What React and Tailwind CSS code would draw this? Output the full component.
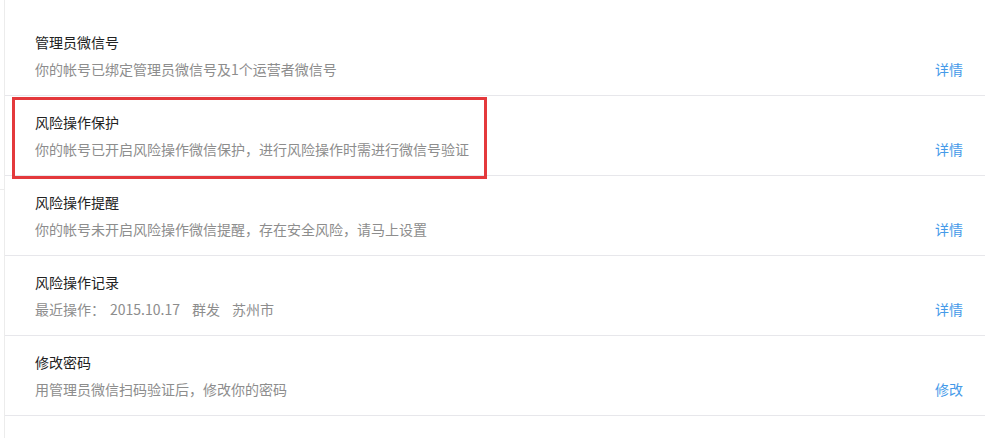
const items = [
  { title: '管理员微信号', desc: '你的帐号已绑定管理员微信号及1个运营者微信号', action: '详情' },
  { title: '风险操作保护', desc: '你的帐号已开启风险操作微信保护，进行风险操作时需进行微信号验证', action: '详情', marked: true },
  { title: '风险操作提醒', desc: '你的帐号未开启风险操作微信提醒，存在安全风险，请马上设置', action: '详情' },
  {
    title: '风险操作记录',
    desc: (
      <>
        最近操作：<span className="ml-[5px]">2015.10.17</span>
        <span className="ml-[12px]">群发</span>
        <span className="ml-[12px]">苏州市</span>
      </>
    ),
    action: '详情',
  },
  { title: '修改密码', desc: '用管理员微信扫码验证后，修改你的密码', action: '修改' },
];

export default function App() {
  return (
    <div
      className="relative w-[985px] h-[438px] overflow-hidden bg-white text-[14px]"
      style={{ fontFamily: '"Noto Sans CJK SC", "Liberation Sans", sans-serif' }}
    >
      <div className="absolute left-0 top-[189px] w-[4px] h-px bg-[#ececec]" />
      <div className="ml-[4px] h-full border-l border-[#ececec] pt-[16px]">
        {items.map((item, i) => (
          <div
            key={i}
            className="relative h-[80px] border-b border-[#e7e7eb] pl-[30px] pr-[22px] pt-[15px] flex items-end justify-between pb-[16px]"
          >
            <div className="flex flex-col">
              <span className="leading-[20px] text-[#222]">{item.title}</span>
              <span className="mt-[7px] leading-[20px] text-[#8d8d8d]">{item.desc}</span>
            </div>
            <a href="#" className="leading-[20px] text-[#459ae9]">{item.action}</a>
            {item.marked && (
              <div className="absolute left-[7px] top-[1px] w-[475px] h-[82px] border-[3px] border-[#e4393c]" />
            )}
          </div>
        ))}
      </div>
    </div>
  );
}
